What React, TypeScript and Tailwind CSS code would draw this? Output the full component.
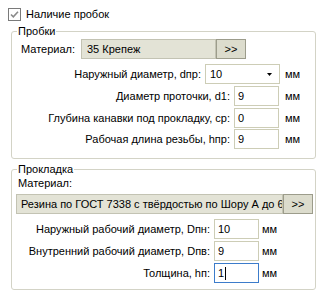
import React from "react";

const font = { fontFamily: '"Liberation Sans", Arial, sans-serif' };

function Row({
  label,
  children,
  unitGap,
  unitW,
}: {
  label: string;
  children: React.ReactNode;
  unitGap: string;
  unitW: string;
}) {
  return (
    <div className="flex items-center h-[20px]">
      <div className="flex-1 text-right pr-[4px] whitespace-nowrap">{label}</div>
      {children}
      <div className={`${unitGap} ${unitW} whitespace-nowrap`}>мм</div>
    </div>
  );
}

function Input({ value, w, focused }: { value: string; w: string; focused?: boolean }) {
  return (
    <div
      className={`${w} h-[20px] bg-white border flex items-center pl-[3px] ${
        focused ? "border-[#3c7ccb]" : "border-[#cdcdb6]"
      }`}
    >
      <span>{value}</span>
      {focused && <span className="inline-block w-[1px] h-[13px] bg-black ml-[1px]" />}
    </div>
  );
}

export default function App() {
  return (
    <div
      className="w-[321px] h-[294px] bg-white text-black text-[11px] leading-[13px] overflow-hidden"
      style={font}
    >
      {/* checkbox row */}
      <div className="flex items-center h-[13px] mt-[8px] ml-[8px]">
        <svg width="13" height="13" viewBox="0 0 13 13">
          <rect x="0.5" y="0.5" width="12" height="12" fill="#fff" stroke="#7a7a7a" />
          <path d="M3 6.5 L5.3 8.8 L10 3.8" fill="none" stroke="#8a8a8a" strokeWidth="1.6" />
        </svg>
        <span className="ml-[5px]">Наличие пробок</span>
      </div>

      {/* group 1 */}
      <fieldset className="ml-[11px] mt-[4px] w-[305px] border border-[#d3d3c6] rounded-[3px] pb-[9px]">
        <legend className="ml-[5px] px-[1px] leading-[13px]">Пробки</legend>
        <div className="flex items-center h-[20px] mt-[1px]">
          <div className="w-[69px] pl-[9px]">Материал:</div>
          <div className="w-[135px] h-[20px] bg-[#e3e3d6] border border-[#c3c3b3] flex items-center pl-[5px] whitespace-nowrap overflow-hidden">
            35 Крепеж
          </div>
          <div className="w-[30px] h-[20px] bg-[#dcdccd] border border-[#9c9c8b] flex items-center justify-center">
            &gt;&gt;
          </div>
        </div>
        <div className="mt-[5px]">
          <Row label="Наружный диаметр, dпр:" unitGap="ml-[5px]" unitW="w-[30px]">
            <div className="w-[75px] h-[20px] bg-white border border-[#cdcdb6] flex items-center pl-[4px] pr-[7px]">
              <span className="flex-1">10</span>
              <svg width="5" height="3" viewBox="0 0 5 3">
                <path d="M0 0 H5 L2.5 3 Z" fill="#000" />
              </svg>
            </div>
          </Row>
        </div>
        <div className="mt-[2px]">
          <Row label="Диаметр проточки, d1:" unitGap="ml-[6px]" unitW="w-[30px]">
            <Input value="9" w="w-[45px]" />
          </Row>
        </div>
        <div className="mt-[2px]">
          <Row label="Глубина канавки под прокладку, ср:" unitGap="ml-[6px]" unitW="w-[30px]">
            <Input value="0" w="w-[45px]" />
          </Row>
        </div>
        <div className="mt-[1px]">
          <Row label="Рабочая длина резьбы, hпр:" unitGap="ml-[6px]" unitW="w-[30px]">
            <Input value="9" w="w-[45px]" />
          </Row>
        </div>
      </fieldset>

      {/* group 2 */}
      <fieldset className="ml-[11px] mt-[4px] w-[305px] border border-[#d3d3c6] rounded-[3px] pb-[6px]">
        <legend className="ml-[5px] px-[1px] leading-[13px]">Прокладка</legend>
        <div className="mt-[1px] pl-[6px] h-[13px]">Материал:</div>
        <div className="flex items-center h-[20px] mt-[4px] ml-[4px]">
          <div className="w-[267px] h-[20px] bg-[#e3e3d6] border border-[#c3c3b3] flex items-center pl-[4px] whitespace-nowrap overflow-hidden">
            Резина по ГОСТ 7338 с твёрдостью по Шору А до 65
          </div>
          <div className="w-[30px] h-[20px] bg-[#dcdccd] border border-[#9c9c8b] flex items-center justify-center">
            &gt;&gt;
          </div>
        </div>
        <div className="mt-[5px]">
          <Row label="Наружный рабочий диаметр, Dпн:" unitGap="ml-[3px]" unitW="w-[53px]">
            <Input value="10" w="w-[45px]" />
          </Row>
        </div>
        <div className="mt-[2px]">
          <Row label="Внутренний рабочий диаметр, Dпв:" unitGap="ml-[3px]" unitW="w-[53px]">
            <Input value="9" w="w-[45px]" />
          </Row>
        </div>
        <div className="mt-[2px]">
          <Row label="Толщина, hп:" unitGap="ml-[3px]" unitW="w-[53px]">
            <Input value="1" w="w-[45px]" focused />
          </Row>
        </div>
      </fieldset>
    </div>
  );
}
